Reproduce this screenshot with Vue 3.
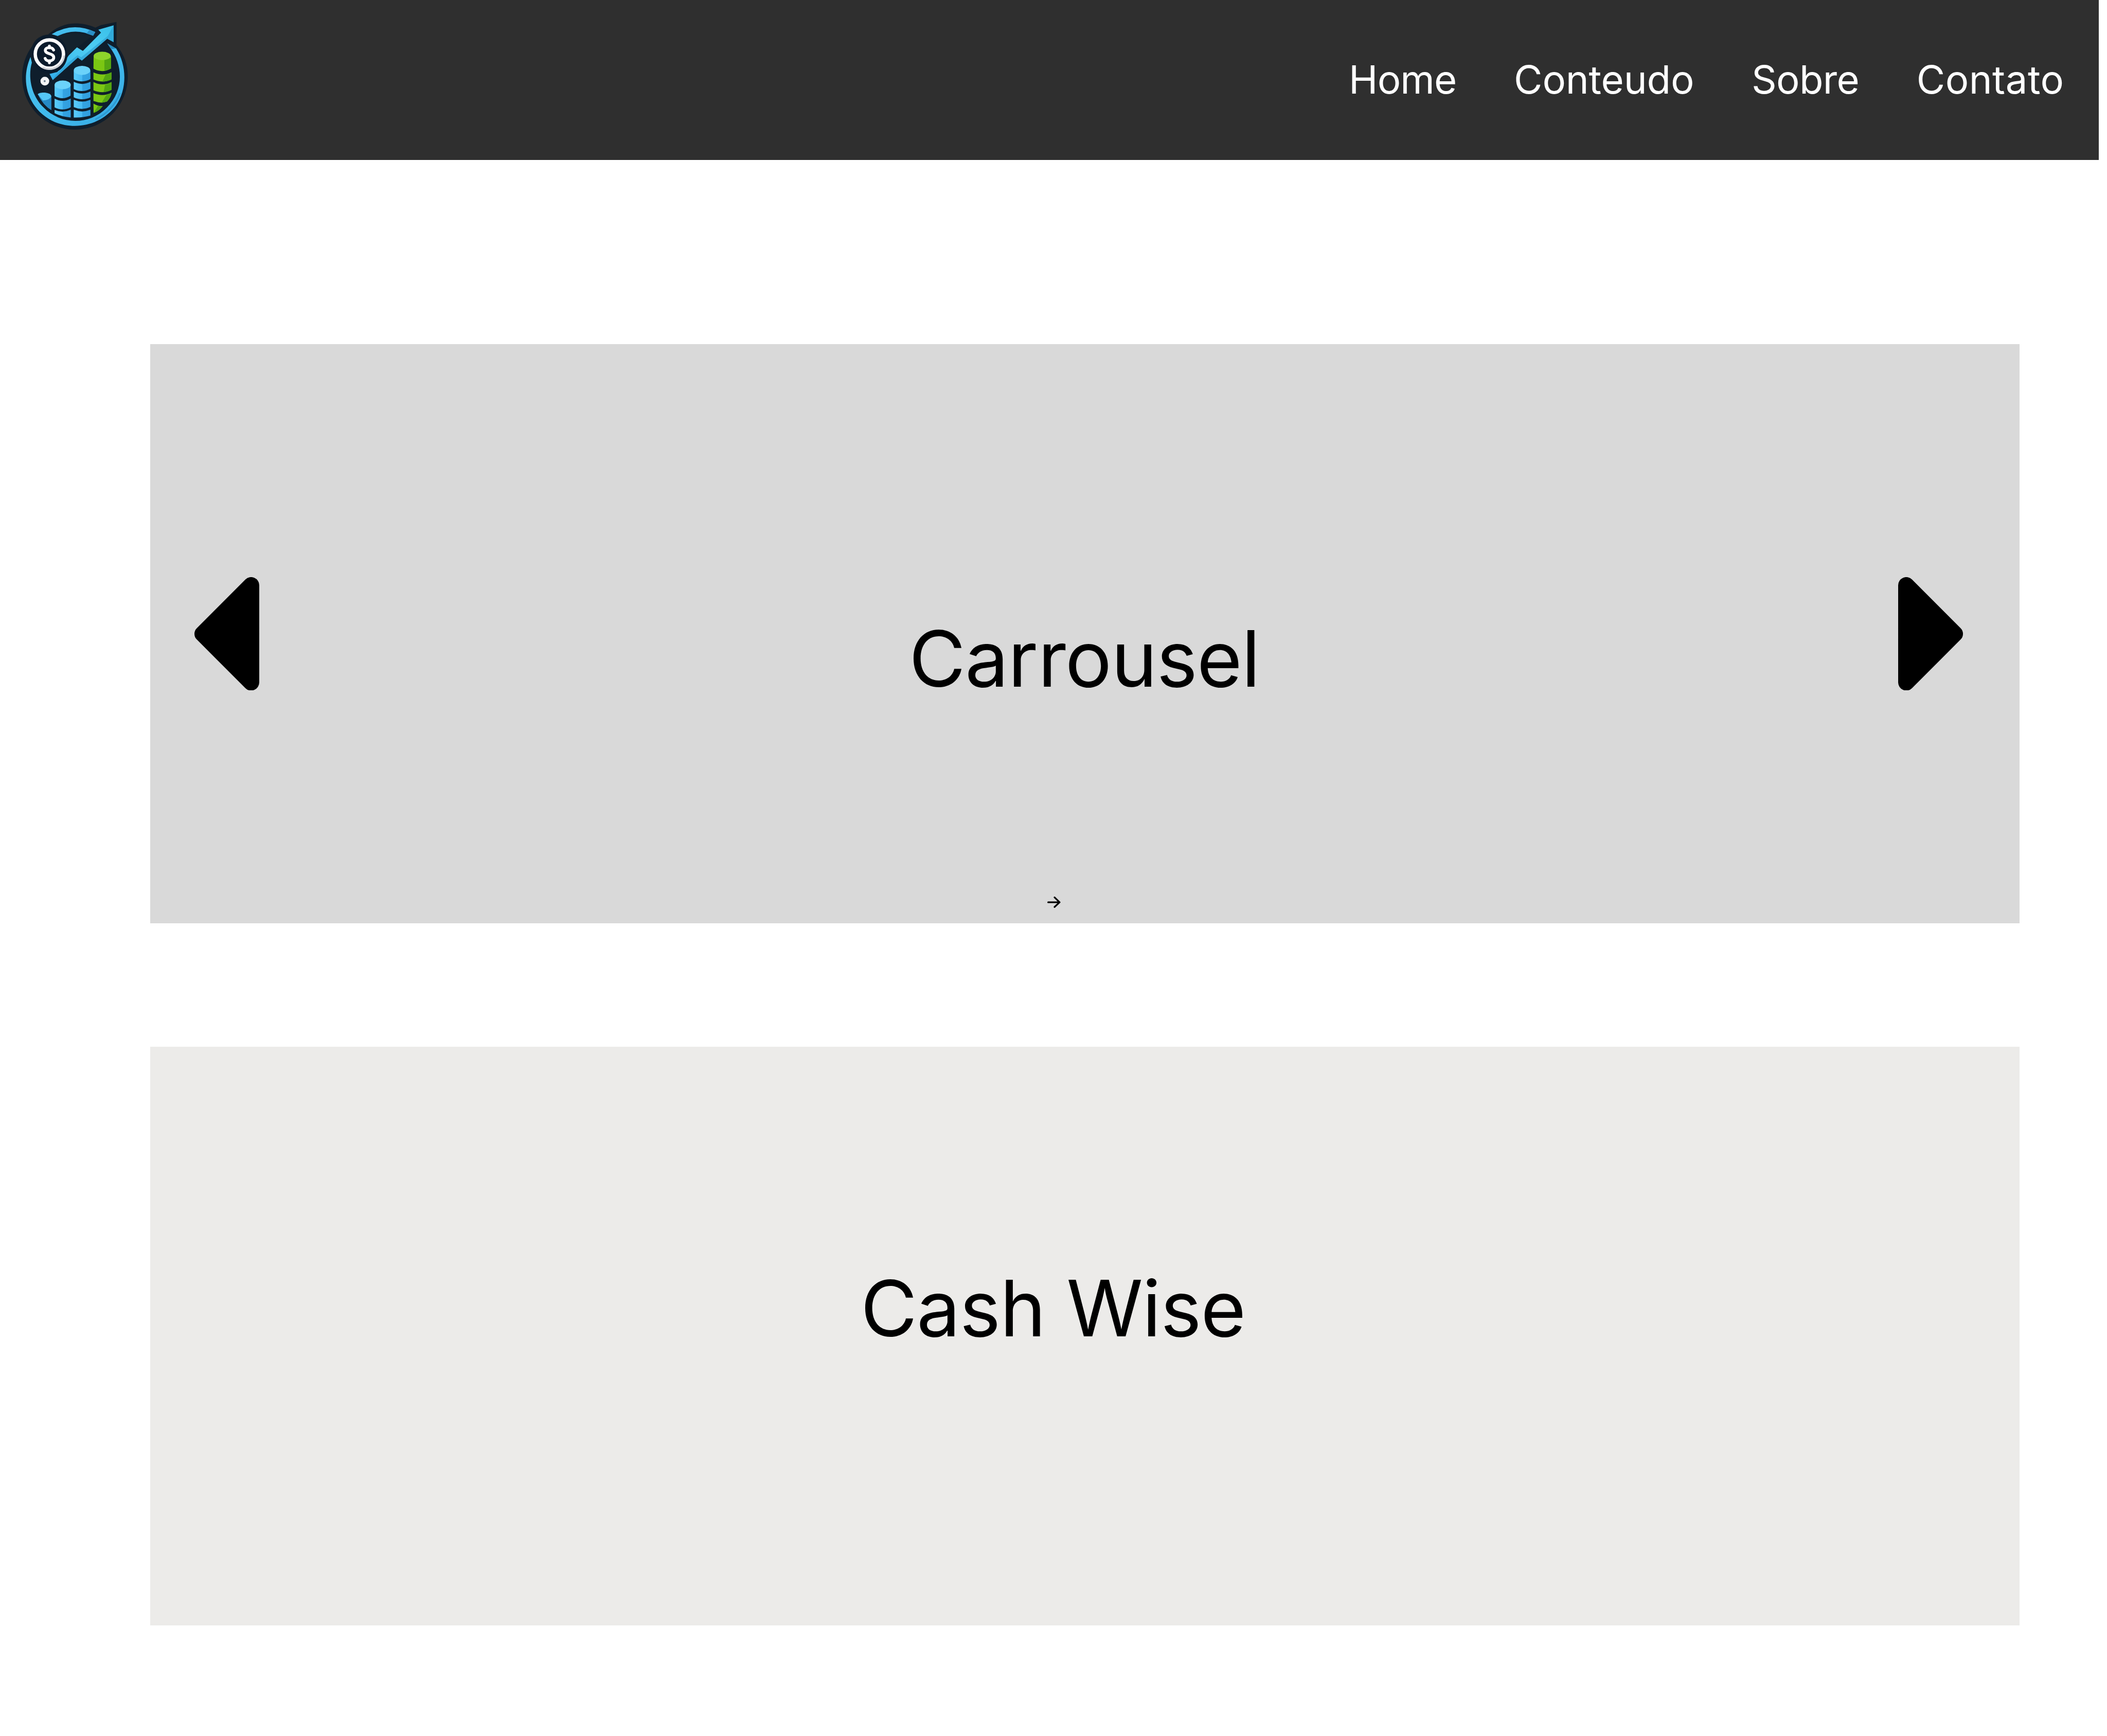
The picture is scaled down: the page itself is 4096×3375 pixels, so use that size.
<script setup>
const links = [
  { label: 'Home', name: 'home' },
  { label: 'Conteudo', name: 'conteudo' },
  { label: 'Sobre', name: 'sobre' },
  { label: 'Contato', name: 'contato' },
]
</script>

<template>
  <div class="page">
    <header class="navbar">
      <svg class="logo" viewBox="125 125 640 650" role="img" aria-label="Cash Wise">
        <defs>
          <linearGradient id="ring" x1="0" y1="0" x2="1" y2="1">
            <stop offset="0" stop-color="#4cc6f1" />
            <stop offset=".6" stop-color="#3fb8ec" />
            <stop offset="1" stop-color="#36a8e2" />
          </linearGradient>
          <linearGradient id="trend" x1="0" y1="1" x2="1" y2="0">
            <stop offset="0" stop-color="#33aeea" />
            <stop offset=".6" stop-color="#4fcef3" />
            <stop offset="1" stop-color="#38bfe9" />
          </linearGradient>
          <linearGradient id="blue" x1="0" y1="0" x2="1" y2="0">
            <stop offset="0" stop-color="#5accfb" />
            <stop offset=".5" stop-color="#46b9f3" />
            <stop offset=".52" stop-color="#33a3e2" />
            <stop offset="1" stop-color="#319ede" />
          </linearGradient>
        </defs>

        <!-- badge -->
        <path fill="#0f1e2c" d="M445 139C486 139 530 147 566 164L600 149L692 130V268C735 320 761 385 759 456C757 630 620 770 445 770C270 770 131 630 131 456C131 385 155 322 192 272C205 232 245 206 285 205C330 165 385 139 445 139Z" />
        <path fill="#14222d" d="M345 214Q440 180 545 215L460 282L430 305L395 330Q385 240 320 222Z" />

        <!-- ring -->
        <path fill="url(#ring)" d="M307 203Q430 128 566 190L553 212Q445 162 342 214Z" />
        <path fill="#2a8fc4" d="M530 178L566 190L553 212L514 199Z" />
        <path fill="url(#ring)" fill-rule="evenodd" d="M181 338L189 372C166 450 181 560 255 635C360 745 530 745 634 640C735 540 735 390 652 280L637 257L690 288C755 390 755 530 690 626C600 745 450 775 325 725C170 655 115 490 181 338Z" />
        <path fill="#1b78ad" d="M637 257L690 288Q674 290 660 292Z" opacity=".7" />
        <path fill="none" stroke="#207fb8" stroke-width="9" d="M713 553A284 284 0 0 1 566 709" opacity=".5" />

        <!-- trend arrow -->
        <path fill="url(#trend)" d="M294 439L340 428L408 329L457 281L492 302L600 194L584 176L675 150V250L637 230L486 360L462 342L313 476Z" />
        <path fill="#2492c9" d="M313 476L325 452L405 372L460 328L482 340L640 214L675 150V250L637 230L486 360L462 342Z" opacity=".5" />

        <!-- dollar coin -->
        <path fill="#0b1b2c" d="M195 330A98 98 0 0 1 395 290C412 350 385 400 340 425Q260 450 215 400Z" />
        <circle cx="293" cy="321" r="84" fill="none" stroke="#fcfcfd" stroke-width="20" />
        <path fill="none" stroke="#cfd1d6" stroke-width="10" d="M381 330A89 89 0 0 1 252 400" />
        <path fill="none" stroke="#fff" stroke-width="17" stroke-linecap="round" stroke-linejoin="round" d="M318 297C308 276 268 278 269 300C270 323 319 315 319 341C319 366 276 369 268 347M293 273V284M293 361V373" />
        <circle cx="266" cy="482" r="26" fill="#f5f6f7" />
        <circle cx="265" cy="482" r="6" fill="#718493" />

        <!-- coin stacks -->
        <path fill="#2589c6" d="M224 560Q260 540 305 570V655Q255 625 224 560Z" />
        <path fill="#55c6f5" d="M224 560C235 545 302 546 304 571C300 590 275 596 255 597Z" />
        <g fill="url(#blue)">
          <path d="M324 504H419V568Q372 598 324 570Z" />
          <path d="M324 586Q372 612 420 585V637Q372 663 324 638Z" />
          <path d="M324 653Q372 674 420 652V698Q365 693 324 672Z" />
          <path d="M438 420H537V470Q488 496 438 471Z" />
          <path d="M438 486Q488 511 537 486V528Q488 553 438 529Z" />
          <path d="M438 543Q488 567 537 543V578Q488 601 438 578Z" />
          <path d="M438 593Q488 614 537 593V635Q488 658 438 636Z" />
          <path d="M438 652Q488 672 537 652V687Q490 700 438 698Z" />
        </g>
        <g fill="#6bd2fa">
          <ellipse cx="372" cy="504" rx="48" ry="26" />
          <ellipse cx="487" cy="418" rx="49" ry="27" />
        </g>
        <g fill="#7bc713">
          <path d="M556 334H659V407Q607 437 555 408Z" />
          <path d="M555 430Q610 455 662 429V472Q610 497 555 472Z" />
          <path d="M555 487Q610 515 662 487V534Q610 560 555 536Z" />
          <path d="M555 553Q610 577 663 551Q658 580 636 603Q600 617 555 600Z" />
          <path d="M555 615Q580 632 610 630Q590 658 556 671Z" />
        </g>
        <g fill="#53a512">
          <path d="M620 355L659 340V407Q640 418 620 421Z" />
          <path d="M627 443Q646 438 662 429V472Q636 484 608 485Z" />
          <path d="M624 504Q645 499 662 487V534Q640 545 615 548Z" />
          <path d="M632 564Q650 560 663 551Q658 580 636 603Q620 609 603 610Z" />
          <path d="M582 629Q596 632 610 630Q590 658 556 671Z" />
        </g>
        <ellipse cx="607" cy="332" rx="51" ry="25" fill="#8dd32b" />
      </svg>

      <nav class="links">
        <a v-for="link in links" :key="link.name" class="link" :class="link.name">{{ link.label }}</a>
      </nav>
    </header>

    <main class="content">
      <section class="carousel">
        <svg class="arrow" viewBox="0 0 385 674">
          <path d="M385 48V626A48 48 0 0 1 303 660L14 371A48 48 0 0 1 14 303L303 14A48 48 0 0 1 385 48Z" />
        </svg>
        <h1 class="title">Carrousel</h1>
        <svg class="arrow" viewBox="0 0 385 674">
          <path d="M0 48V626A48 48 0 0 0 82 660L371 371A48 48 0 0 0 371 303L82 14A48 48 0 0 0 0 48Z" />
        </svg>
        <svg class="hint" viewBox="0 0 78 67">
          <path d="M5 34H73M43 5L73 34L43 62" />
        </svg>
      </section>

      <section class="about">
        <h2 class="title">Cash Wise</h2>
      </section>
    </main>
  </div>
</template>

<style>
body {
  margin: 0;
  background: #fff;
}
</style>

<style scoped>
.page {
  width: 4096px;
  height: 3375px;
  overflow: hidden;
  background: #fff;
  font-family: Inter, sans-serif;
}

.navbar {
  box-sizing: border-box;
  display: flex;
  justify-content: space-between;
  align-items: flex-start;
  width: 4079.5px;
  height: 310.5px;
  padding: 41px 66.9px 0 41px;
  background: #2f2f2f;
}

.logo {
  width: 209.4px;
  height: 212.6px;
}

.links {
  display: flex;
  gap: 111.6px;
  margin-top: 67px;
}

.link {
  color: #fff;
  font-size: 76px;
  line-height: 92px;
}

.home {
  letter-spacing: -0.9px;
}

.conteudo {
  letter-spacing: -0.14px;
}

.sobre {
  letter-spacing: -0.67px;
}

.contato {
  letter-spacing: 0.47px;
}

.content {
  display: flex;
  flex-direction: column;
  gap: 240px;
  padding: 358.5px 170.3px 0 292px;
}

.carousel {
  position: relative;
  box-sizing: border-box;
  display: flex;
  align-items: center;
  justify-content: space-between;
  height: 1125.5px;
  padding: 0 110.1px 0 86.1px;
  background: #d9d9d9;
}

.arrow {
  width: 126px;
  height: 220.5px;
}

.title {
  margin: 0;
  color: #000;
  font-size: 151px;
  font-weight: 400;
  line-height: 184px;
}

.carousel .title {
  margin: 95.6px 0 0 22.2px;
  letter-spacing: -1.19px;
}

.hint {
  position: absolute;
  left: 1744.3px;
  bottom: 30px;
  width: 25.5px;
  height: 22px;
  fill: none;
  stroke: #000;
  stroke-width: 10;
  stroke-linecap: round;
  stroke-linejoin: round;
}

.about {
  display: flex;
  justify-content: center;
  align-items: center;
  height: 1125.5px;
  background: #ecebe9;
}

.about .title {
  margin: 0 123.6px 108.2px 0;
  letter-spacing: -1.3px;
}
</style>
